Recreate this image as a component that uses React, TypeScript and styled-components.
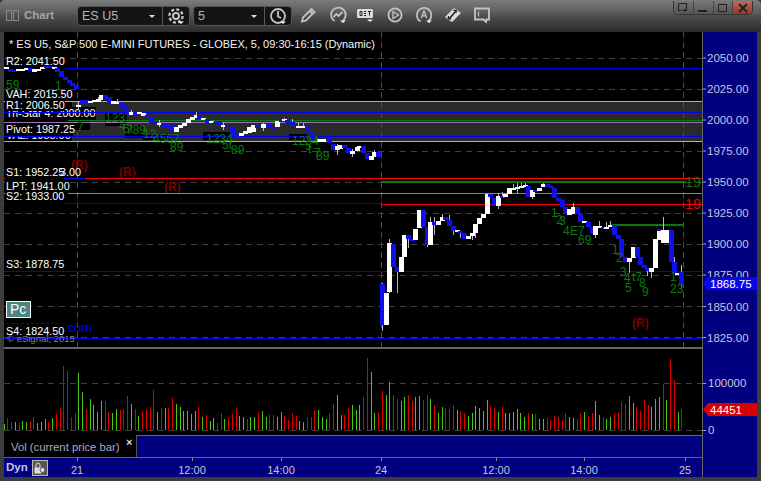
import React from "react";
import styled, { createGlobalStyle } from "styled-components";

const Global = createGlobalStyle`
  html, body { margin: 0; padding: 0; background: #3c3c3c; }
  #root { width: 761px; height: 481px; overflow: hidden; }
`;

const Win = styled.div`
  width: 761px; height: 481px; display: flex; flex-direction: column; box-sizing: border-box;
  background: #4a4a4a; font-family: "Liberation Sans", Arial, sans-serif; overflow: hidden;
  border-radius: 5px 5px 0 0;
`;
const TitleBar = styled.div`
  height: 32px; flex: none; display: flex; align-items: flex-start; position: relative; box-sizing: border-box;
  padding: 0 0 0 6px; background: linear-gradient(#7b7b7b 0, #5e5e5e 12px, #4e4e4e 16px, #2d2d2d 32px);
`;
const GripIcon = styled.svg`width: 14px; height: 14px; margin-top: 9px; flex: none;`;
const TitleText = styled.div`
  margin: 8px 0 0 4px; width: 53px; flex: none; font-size: 11.5px; font-weight: 700; line-height: 14px; color: #a4a4a4;
`;
const Group = styled.div<{ $w: number; $ml?: number }>`
  width: ${(p) => p.$w}px; margin: 6px 0 0 ${(p) => p.$ml ?? 0}px; height: 20px; flex: none; display: flex; box-sizing: border-box;
  border: 1px solid #555; border-radius: 4px; background: #141414; overflow: hidden;
`;
const SelectBox = styled.div`
  flex: 1; display: flex; align-items: center; justify-content: space-between; box-sizing: border-box; padding: 0 7px 0 4px;
  font-size: 12.5px; color: #b4b4b4; border-right: 1px solid #5a5a5a;
`;
const Caret = styled.span`
  width: 0; height: 0; border-left: 3px solid transparent; border-right: 3px solid transparent; border-top: 3px solid #ddd;
`;
const GroupBtn = styled.div`width: 26px; flex: none; display: flex; align-items: center; justify-content: center;`;
const Tool = styled.div<{ $ml: number }>`
  margin: 5px 0 0 ${(p) => p.$ml}px; width: 20px; height: 20px; flex: none; display: flex; align-items: center; justify-content: center;
`;
const WinControls = styled.div`
  position: absolute; top: 1px; left: 673px; width: 80px; height: 14px; display: flex; box-sizing: border-box;
  border: 1px solid #333; border-top: none; border-radius: 0 0 5px 5px; overflow: hidden; background: #666;
`;
const WinBtn = styled.div<{ $close?: boolean }>`
  flex: 1; display: flex; align-items: center; justify-content: center; border-left: 1px solid #444;
  background: ${(p) => (p.$close ? "linear-gradient(#c46a55,#8f3a28)" : "linear-gradient(#777,#555)")};
  &:first-child { border-left: none; }
`;
const Body = styled.div`
  flex: 1; display: flex; box-sizing: border-box; padding: 0 4px 4px 4px;
  background: #3c3c3c; border-left: 0;
`;
const Left = styled.div`width: 698px; flex: none; display: flex; flex-direction: column;`;
const Right = styled.div`flex: 1; display: flex; flex-direction: column; background: #000080; border-left: 1px solid #666;`;
const Svg = styled.svg`display: block; flex: none; background: #000;`;
const AxisSvg = styled.svg`display: block; flex: none; background: #000080;`;
const Sep = styled.div`height: 2px; flex: none; background: #666;`;
const LegendRow = styled.div`height: 22px; flex: none; display: flex;`;
const LegendTab = styled.div`
  width: 132px; flex: none; position: relative; background: #000; color: #a9a9c0; font-size: 11.3px; line-height: 24px; padding-left: 7px; box-sizing: border-box;
`;
const LegendClose = styled.span`
  position: absolute; left: 122px; top: -5px; color: #ddd; font-size: 11px; font-weight: 700;
`;
const LegendFill = styled.div`flex: 1; background: #000080; border-top: 1px solid #666; border-left: 1px solid #555;`;
const TimeBar = styled.div`
  height: 20px; flex: none; position: relative; display: flex; align-items: center; gap: 4px; box-sizing: border-box; padding-left: 2px;
  background: #000080; border-top: 1px solid #666;
`;
const DynLabel = styled.span`font-size: 11.5px; font-weight: 700; color: #c4c4dc; margin-top: -2px;`;
const LockBox = styled.div`
  width: 16px; height: 16px; box-sizing: border-box; border: 1px solid #bbb; background: #555; display: flex; align-items: center; justify-content: center;
`;
const TimeLabel = styled.span<{ $x: number }>`
  position: absolute; left: ${(p) => p.$x - 4 - 25}px; width: 50px; top: 5px; text-align: center; font-size: 11px; line-height: 14px; color: #c4c4dc;
`;
const TimeTick = styled.i<{ $x: number }>`
  position: absolute; left: ${(p) => p.$x - 4}px; top: 0; width: 1px; height: 3px; background: #888;
`;
const TimeEnd = styled.i`position: absolute; left: 698px; top: -1px; width: 1px; height: 1px; background: #666;`;
const AxisFoot = styled.div`flex: 1; background: #000080;`;
const HeaderText = styled.text`font: 11px "Liberation Sans", Arial, sans-serif; fill: #f4f4f4;`;
const LabelText = styled.text`
  font: 10.8px "Liberation Sans", Arial, sans-serif; fill: #fff;
`;
const TdText = styled.text`font: 12px "Liberation Sans", Arial, sans-serif; fill: #0c7a0c;`;
const RText = styled.text`font: bold 12px "Liberation Sans", Arial, sans-serif; fill: #7c0000;`;
const LinkText = styled.text`font: 13px "Liberation Sans", Arial, sans-serif; fill: #0000f0;`;
const CopyText = styled.text`font: 9.5px "Liberation Sans", Arial, sans-serif; fill: #808080;`;
const PcText = styled.text`font: 14px "Liberation Sans", Arial, sans-serif; fill: #fff;`;
const SeqText = styled.text<{ $c: string }>`font: 14.5px "Liberation Sans", Arial, sans-serif; fill: ${(p) => p.$c};`;
const AxisText = styled.text`font: 11.5px "Liberation Sans", Arial, sans-serif; fill: #c6c6dc;`;
const MarkerText = styled.text`font: 11.5px "Liberation Sans", Arial, sans-serif; fill: #fff;`;

type C = [number, number, number, "w" | "b", number?, number?];
const Z3: C[] = [[18,52,58,"w"],[30,56,65,"b"],[42,60,65,"b"],[55,58,62,"w"],[67,56,62,"w"],[79,55,58,"w"],[91,55,62,"b"],[103,58,65,"w"],[115,56,62,"w"],[127,50,58,"w"],[139,47,52,"b"],[151,48,55,"b"],[161,52,58,"w"],[170,55,65,"b"],[182,62,80,"b"],[194,80,90,"b"],[206,90,100,"b"],[217,98,108,"b"],[228,105,118,"b"],
[235,165,172,"w",155,180],[247,150,160,"b"],[259,150,162,"b"],[271,152,158,"w"],[283,150,156,"w"],[295,148,155,"w",140],[304,135,150,"w"],[316,135,150,"b"],[327,142,158,"b"],[339,152,162,"w"],[351,155,160,"w",148],[363,155,172,"b"],[373,165,180,"b"],[382,178,195,"b"],[394,185,195,"w",180],[406,185,195,"b"],[418,186,193,"w"],[430,190,198,"w"],[442,195,205,"b"],[454,205,218,"b"],[466,212,222,"b"],[478,218,224,"w",210,232],[490,218,232,"b"],[502,222,232,"b"],[517,228,245,"b"],[529,232,245,"w"],[541,225,235,"w"],[553,218,228,"w"],[565,208,218,"w"],[577,200,210,"w"],[589,195,205,"w",185],[598,195,208,"b"],[610,205,210,"w"],[622,208,222,"b"],[634,212,220,"w"],[646,215,222,"b"],[658,212,225,"b"],[670,225,232,"w",215,240],[682,225,235,"b"],[697,235,255,"b"],[712,250,260,"b"],[724,248,258,"w"],[736,242,252,"w"],[748,232,248,"w"],[760,226,245,"w"],[772,226,235,"b"]];
const Z9: C[] = [[188,102,115,"w",98,122],[205,100,110,"b"],[218,110,118,"b"],[232,92,110,"w"],[243,90,95,"b"],[253,88,92,"w",84],[262,90,98,"b"],[277,95,105,"b",88],[295,108,113,"w",100],[308,108,113,"w",100],[322,108,125,"b"],[333,125,135,"b"],[343,135,150,"b"],[356,148,155,"w",158],[368,148,155,"w"],[387,143,160,"b"],[400,162,180,"b"],[412,168,180,"w",162,195],[420,165,178,"w"],[433,165,175,"b"],[445,175,190,"b"],[457,182,192,"w",176,200],[470,170,182,"w"],[478,168,172,"w"],[490,168,190,"b"],[502,190,208,"b"],[514,198,210,"w"],[522,185,200,"w",180],[535,185,202,"b"]];
const Z5: C[] = [[37,342,465,"b",340,483],[49,370,465,"w"],[58,220,365,"w",208,370],[70,222,290,"b"],[82,292,305,"b",290,370],[94,261,305,"w"],[103,195,260,"w"],[115,195,208,"b",195,233],[127,208,212,"b"],[136,178,210,"w"],[147,120,175,"w"],[160,120,170,"b"],[171,170,225,"b",170,230],[181,156,225,"w",140],[191,156,165,"b",140,195],[205,153,165,"w"],[216,142,152,"w",132],[226,142,150,"b"],[238,150,168,"b",135],[250,168,183,"b",168,195],[262,180,186,"w"],[270,184,190,"b",184,205],[282,190,207,"b"],[295,198,207,"w"],[306,188,198,"w",188,210],[316,162,188,"w",162,205],[328,145,162,"w"],[340,132,145,"w"],[352,72,132,"w"],[361,72,80,"b"],[372,84,107,"b"],[385,78,107,"w",68,118],[396,78,82,"b",65],[406,72,80,"w"],[418,55,72,"w"],[430,55,60,"w",42],[442,50,55,"w",40,70],[452,47,52,"w",40],[464,45,50,"w",38],[473,48,80,"b"],[487,60,80,"w",60,88],[496,60,65,"b"],[508,55,62,"w"],[519,42,52,"w",38],[532,42,50,"b"],[543,48,55,"b"],[552,55,83,"b"],[564,83,93,"b"],[576,90,110,"b"]];
const Z6: C[] = [[16,110,133,"b"],[28,118,135,"w"],[40,112,133,"w",100],[52,112,133,"b"],[61,133,155,"b"],[73,152,155,"w"],[85,155,172,"b"],[97,172,193,"b"],[106,167,195,"w",167,205],[118,167,172,"w",153],[130,172,178,"b"],[139,172,178,"w",155],[151,165,172,"w",153],[163,165,195,"b"],[175,195,208,"b"],[184,208,260,"b"],[196,260,275,"b"],[208,265,275,"w",265,308],[220,232,265,"w"],[232,232,262,"b"],[241,262,285,"b"],[253,285,293,"b"],[262,293,303,"b",293,318],[274,293,305,"w",293,325],[286,208,295,"w"],[298,177,210,"w"],[298,177,183,"b"],[310,180,220,"w",140],[325,180,220,"w"],[332,180,275,"b"],[343,275,310,"b",262],[352,308,312,"w"],[364,305,345,"b",285,350]];

const toPage = (list: C[], ox: number, oy: number) =>
  list.map(([z, t, b, c, wt, wb]) => ({
    x: Math.round(ox + z / 3),
    t: Math.round(oy + t / 3),
    b: Math.round(oy + b / 3),
    c,
    wt: Math.round(oy + (wt ?? t) / 3),
    wb: Math.round(oy + (wb ?? b) / 3),
  }));
const candles = [...toPage(Z3, 0, 50), ...toPage(Z9, 200, 90), ...toPage(Z5, 370, 170), ...toPage(Z6, 560, 170)];

type V = [number, number, "r" | "g"];
const VZ7: V[] = [[12,252,"g"],[22,235,"r"],[34,246,"r"],[46,246,"g"],[57,250,"r"],[67,243,"g"],[79,246,"g"],[90,246,"r"],[100,232,"r"],[112,250,"g"],[124,247,"g"],[135,238,"g"],[145,246,"r"],[157,234,"g"],[169,222,"r"],[181,204,"r"],[190,78,"r"],[202,93,"r"],[214,231,"r"],[226,219,"r"],[235,99,"g"],[247,156,"g"],[259,208,"r"],[271,177,"g"],[281,195,"g"],[292,216,"g"],[304,183,"g"],[316,183,"r"],[326,216,"r"],[338,219,"g"],[349,207,"g"],[361,210,"r"],[370,207,"r"],[382,168,"r"],[394,192,"g"],[406,207,"r"],[415,228,"g"],[427,213,"r"],[439,210,"r"],[451,201,"r"],[460,150,"r"],[472,216,"g"],[484,204,"r"],[496,204,"g"],[505,204,"r"],[517,174,"r"],[529,192,"g"],[541,201,"g"],[550,213,"g"],[562,213,"g"],[574,222,"g"],[586,213,"g"],[595,201,"r"],[607,231,"g"],[619,225,"r"],[631,243,"g"],[640,234,"g"],[652,249,"r"],[664,219,"r"],[673,237,"g"],[685,234,"r"],[697,222,"r"],[709,204,"r"],[718,228,"g"],[730,231,"g"],[742,237,"r"],[751,231,"g"],[763,231,"g"]];
const VZ11: V[] = [[10,186,"r"],[22,183,"g"],[34,201,"g"],[43,195,"r"],[55,195,"r"],[67,201,"g"],[79,186,"g"],[88,198,"r"],[100,210,"r"],[112,189,"r"],[124,198,"r"],[133,213,"g"],[145,216,"g"],[157,201,"r"],[169,201,"r"],[178,180,"r"],[190,180,"g"],[202,201,"g"],[214,207,"g"],[223,189,"r"],[235,162,"r"],[247,135,"g"],[259,195,"g"],[268,195,"r"],[280,174,"r"],[292,165,"g"],[304,180,"g"],[313,165,"g"],[325,141,"r"],[337,24,"r"],[349,66,"g"],[358,189,"g"],[370,186,"r"]];
const VZ10: V[] = [[7,153,"r"],[19,165,"g"],[28,126,"g"],[40,165,"r"],[52,177,"r"],[64,183,"g"],[73,171,"g"],[85,165,"r"],[97,183,"r"],[106,171,"g"],[118,168,"g"],[130,180,"r"],[142,165,"r"],[151,177,"g"],[163,195,"r"],[175,219,"g"],[187,201,"g"],[196,204,"r"],[208,207,"r"],[220,195,"r"],[232,210,"g"],[241,216,"r"],[253,219,"r"],[265,228,"g"],[277,219,"g"],[286,198,"g"],[298,204,"g"],[310,213,"g"],[322,180,"g"],[331,198,"r"],[343,204,"r"],[355,216,"g"],[367,201,"r"]];
const VZ8: V[] = [[16,219,"g"],[28,219,"g"],[40,216,"g"],[52,207,"g"],[61,219,"g"],[73,231,"g"],[85,219,"r"],[97,222,"g"],[106,222,"r"],[118,237,"g"],[130,237,"g"],[142,234,"r"],[151,240,"r"],[163,228,"r"],[175,231,"r"],[187,240,"r"],[196,219,"r"],[208,231,"g"],[220,234,"g"],[232,237,"r"],[241,219,"r"],[253,216,"g"],[265,228,"r"],[277,219,"r"],[286,183,"g"],[298,225,"g"],[310,231,"r"],[319,237,"g"],[331,231,"g"],[343,222,"r"],[355,216,"r"],[364,186,"r"],[376,192,"r"],[388,168,"g"],[400,189,"g"],[409,201,"r"],[421,213,"r"],[433,180,"r"],[445,195,"r"],[454,201,"g"],[466,177,"g"],[478,171,"g"],[490,132,"r"],[499,180,"g"],[511,57,"r"],[523,120,"r"],[535,216,"g"],[544,207,"r"]];
const volSet = (l: V[], ox: number, base: number) =>
  l.map(([z, t, c]) => ({ x: Math.floor(ox + z / 3), h: Math.round((base - t) / 3), c }));
const bars = [...volSet(VZ7, 0, 270), ...volSet(VZ11, 255, 240), ...volSet(VZ10, 380, 270), ...volSet(VZ8, 500, 270)];

const gridYs = [58, 89, 120, 151, 182, 213, 244, 275, 306, 337];
const BLUE = "#0000f8";
const hLines: [number, number, number, string, number][] = [
  [65, 702, 68, BLUE, 1],
  [4, 702, 101, "#40e0d8", 1],
  [4, 702, 112, BLUE, 1],
  [68, 702, 120, "#0a7a0a", 1],
  [4, 702, 122, "#a070b8", 1],
  [4, 702, 136, BLUE, 1],
  [4, 702, 141, "#40e0d8", 1],
  [4, 6, 178, "#ff0000", 1],
  [64, 85, 178, BLUE, 1],
  [85, 702, 178, "#ff0000", 1],
  [381, 686, 181, "#0a7a0a", 2],
  [4, 6, 193, "#a070b8", 1],
  [68, 702, 193, "#a070b8", 1],
  [4, 6, 203, BLUE, 1],
  [64, 381, 203, BLUE, 1],
  [381, 702, 204, "#ff0000", 1],
  [612, 683, 224, "#0a7a0a", 2],
  [4, 702, 271, BLUE, 1],
  [4, 702, 338, BLUE, 1],
];
const patches: [number, number, number, number][] = [
  [4, 100, 68, 41],[68, 107, 28, 13],[68, 120, 22, 10],[105, 112, 22, 14],[125, 125, 18, 13],[143, 135, 29, 5],
  [203, 132, 27, 8],[203, 134, 14, 6],[289, 134, 18, 6],
];
const tdDigits: [number, number, string][] = [
  [6, 89, "59"],[55, 90, "1"],[77, 131, "7"],[105, 122, "123"],[119, 130, "4"],[123, 133, "5t"],[126, 134, "789"],[143, 138, "12"],[153, 143, "4567"],[170, 151, "89"],
  [206, 143, "1234"],[222, 149, "5t"],[231, 154, "89"],[292, 145, "1234"],[305, 150, "5"],[308, 153, "t"],[314, 157, "7"],[316, 160, "89"],
  [551, 217, "1"],[556, 224, "2"],[559, 225, "3"],[563, 235, "4"],[570, 235, "E7"],[578, 244, "69"],
  [612, 254, "1"],[616, 262, "2"],[620, 276, "3"],[624, 282, "4"],[625, 292, "5"],[632, 281, "t7"],[639, 287, "8"],[642, 296, "9"],[670, 281, "1"],[670, 293, "23"],
];
const rMarks: [number, number][] = [[71, 169], [119, 176], [164, 191], [632, 327]];
type L = [number, number, string];
const labelsA: L[] = [[6, 65, "R2: 2041.50"],[6, 98, "VAH: 2015.50"],[6, 117, "Tri-Star 4: 2000.00"],[6, 139, "VAL: 1985.00"]];
const labelsB: L[] = [
  [6, 109, "R1: 2006.50"],[6, 133, "Pivot: 1987.25"],[60, 176, "3.00"],[6, 176, "S1: 1952.25"],[6, 190, "LPT: 1941.00"],[6, 200, "S2: 1933.00"],[6, 268, "S3: 1878.75"],[6, 335, "S4: 1824.50"],
];
const labelBacks: [number, number, number, number][] = [[5, 100, 60, 11], [5, 124, 68, 12], [5, 168, 58, 11], [5, 182, 64, 9], [5, 191, 59, 10]];
const axisTop: [string, number][] = [["2050.00",58],["2025.00",89],["2000.00",120],["1975.00",151],["1950.00",182],["1925.00",213],["1900.00",244],["1875.00",275],["1850.00",306.5],["1825.00",337.5]];

const icon = { fill: "none", stroke: "#c4c4c4", strokeWidth: 1.8 } as const;
const Ico: React.FC<{ children: React.ReactNode; w?: number }> = ({ children, w = 20 }) => (
  <svg width={w} height={20} viewBox="0 0 20 20" {...icon}>{children}</svg>
);
const Drop = () => <path d="M12 15.5h6l-3 2.5z" fill="#eee" stroke="none" />;

const MainPlot = () => (
  <Svg width={698} height={315} viewBox="4 32 698 315">
    <rect x={4} y={102} width={698} height={39} fill="#2a2a2a" />
    {gridYs.map((y) => (
      <line key={y} x1={4} x2={702} y1={y + 0.5} y2={y + 0.5} stroke="#404040" strokeDasharray="6 5" />
    ))}
    {[77.5, 381.5, 683.5].map((x) => (
      <line key={x} x1={x} x2={x} y1={32} y2={347} stroke="#4a4a4a" strokeDasharray="6 4" />
    ))}
    {patches.map(([x, y, w, h], i) => <rect key={i} x={x} y={y} width={w} height={h} fill="#000" />)}
    {rMarks.map(([x, y], i) => <RText key={i} x={x} y={y}>(R)</RText>)}
    {labelsA.map(([x, y, t], i) => <LabelText key={i} x={x} y={y}>{t}</LabelText>)}
    {hLines.map(([a, b, y, c, sw], i) => (
      <rect key={i} x={a} y={y} width={b - a} height={sw} fill={c} shapeRendering="crispEdges" />
    ))}
    <g shapeRendering="crispEdges">
      {candles.map((k, i) => (
        <g key={i}>
          {(k.wt < k.t || k.wb > k.b) && <line x1={k.x + 0.5} x2={k.x + 0.5} y1={k.wt} y2={k.wb} stroke="#b8b8b8" />}
          <rect x={k.x - 2} y={k.t} width={5} height={Math.max(k.b - k.t, 2)} fill={k.c === "w" ? "#fff" : "#1010e8"} />
        </g>
      ))}
    </g>
    {tdDigits.map(([x, y, t], i) => <TdText key={i} x={x} y={y}>{t}</TdText>)}
    <SeqText $c="#0c7a0c" x={685} y={187}>19</SeqText>
    <SeqText $c="#f00000" x={685} y={209}>19</SeqText>
    <HeaderText x={9} y={48}>* ES U5, S&amp;P 500 E-MINI FUTURES - GLOBEX, 5, 09:30-16:15 (Dynamic)</HeaderText>
    <LinkText x={64} y={332}>.com</LinkText>
    <line x1={6} x2={62} y1={323.5} y2={323.5} stroke="#0000f0" strokeDasharray="3 2" />
    <CopyText x={7} y={342}>© eSignal, 2015</CopyText>
    {labelBacks.map(([x, y, w, h], i) => <rect key={i} x={x} y={y} width={w} height={h} fill="#000" />)}
    {labelsB.map(([x, y, t], i) => <LabelText key={i} x={x} y={y}>{t}</LabelText>)}
    <rect x={6.5} y={301.5} width={24} height={16} fill="#4d8585" stroke="#fff" />
    <PcText x={10} y={314}>Pc</PcText>
  </Svg>
);

const VolPlot = () => (
  <Svg width={698} height={86} viewBox="4 349 698 86">
    <line x1={4} x2={702} y1={383.5} y2={383.5} stroke="#404040" strokeDasharray="6 5" />
    <line x1={4} x2={702} y1={430.5} y2={430.5} stroke="#404040" strokeDasharray="6 5" />
    {bars.map((b, i) => (
      <rect key={i} x={b.x} y={430 - b.h} width={1} height={b.h} fill={b.c === "r" ? "#e00000" : "#44cc11"} shapeRendering="crispEdges" />
    ))}
  </Svg>
);

const times: [number, string][] = [[77, "21"], [192, "12:00"], [281, "14:00"], [381, "24"], [496, "12:00"], [584, "14:00"], [685, "25"]];

export default function App() {
  return (
    <Win>
      <Global />
      <TitleBar>
        <GripIcon viewBox="0 0 14 14"><g fill="none" stroke="#8a8a8a"><rect x="0.5" y="1.5" width="5" height="10" /><rect x="7.5" y="1.5" width="5" height="10" /></g></GripIcon>
        <TitleText>Chart</TitleText>
        <Group $w={113}>
          <SelectBox>ES U5<Caret /></SelectBox>
          <GroupBtn>
            <Ico><circle cx="10" cy="10" r="3" strokeWidth={2} /><circle cx="10" cy="10" r="6.6" strokeWidth={2.4} strokeDasharray="3 2.2" /><Drop /></Ico>
          </GroupBtn>
        </Group>
        <Group $w={99} $ml={3}>
          <SelectBox>5<Caret /></SelectBox>
          <GroupBtn>
            <Ico><circle cx="10" cy="10" r="7" strokeWidth={1.8} /><path d="M10 5v5.5l3 1.5" /><Drop /></Ico>
          </GroupBtn>
        </Group>
        <Tool $ml={6}><Ico><path d="M4 16.5l1-4L13.5 4l3 3L8 15.5z" /><path d="M12 6l2.5 2.5" /></Ico></Tool>
        <Tool $ml={10}><Ico><path d="M6.5 16A7.3 7.3 0 1 1 15 15.5" /><path d="M5.5 12l3-3 2 2 4-4" /><Drop /></Ico></Tool>
        <Tool $ml={8}>
          <svg width="20" height="20" viewBox="0 0 20 20"><rect x="1" y="4" width="16" height="9" rx="1.5" fill="#ddd" /><path d="M4 6.5h2v4H4zM8 6.5h2M8 8.5h2M8 10.5h2M12 6.5h3M13.5 6.5v4" stroke="#222" fill="none" /><path d="M11 14.5h6l-3 2.5z" fill="#eee" /></svg>
        </Tool>
        <Tool $ml={9}><Ico><circle cx="10" cy="10" r="6.6" strokeWidth={1.8} /><path d="M8 6.5l5.5 3.5-5.5 3.5z" strokeWidth={1.3} /></Ico></Tool>
        <Tool $ml={9}><Ico><path d="M6.5 16.5A7.3 7.3 0 1 1 14.5 16" strokeWidth={1.8} /><path d="M7.3 13l2.7-7 2.7 7M8.3 10.8h3.4" strokeWidth={1.3} /><Drop /></Ico></Tool>
        <Tool $ml={9}>
          <svg width="20" height="20" viewBox="0 0 20 20"><path d="M2 12L11 3l7 5-9 9z" fill="#ddd" stroke="#999" /><path d="M7 13l5-6M10.5 5.5h2.5v2.5M5.5 11v2.8h2.7" stroke="#222" strokeWidth="1.5" fill="none" /></svg>
        </Tool>
        <Tool $ml={9}><Ico><path d="M3 3.5h14v11h-2.5l-.5 2.5-2.5-2.5H3z" strokeWidth={1.8} /><path d="M6.5 6.5v5" strokeWidth={1.2} /></Ico></Tool>
        <WinControls>
          <WinBtn><svg width="14" height="12" viewBox="0 0 14 12" fill="none" stroke="#222"><path d="M2.5 1.5h8v7h-2" strokeWidth="1.2" /><path d="M2.5 1.5v7h3" strokeWidth="1.2" /><path d="M6 7.5h5l-2.5 2.5z" fill="#222" stroke="none" /></svg></WinBtn>
          <WinBtn><svg width="12" height="10" viewBox="0 0 12 10"><rect x="1" y="7" width="9" height="2" fill="#222" /></svg></WinBtn>
          <WinBtn><svg width="12" height="10" viewBox="0 0 12 10" fill="none" stroke="#222"><rect x="1.5" y="1.5" width="8" height="7" /></svg></WinBtn>
          <WinBtn $close><svg width="12" height="10" viewBox="0 0 12 10" stroke="#222" strokeWidth="2"><path d="M2 1l8 8M10 1L2 9" /></svg></WinBtn>
        </WinControls>
      </TitleBar>
      <Body>
        <Left>
          <MainPlot />
          <Sep />
          <VolPlot />
          <LegendRow>
            <LegendTab>Vol (current price bar)<LegendClose>×</LegendClose></LegendTab>
            <LegendFill />
          </LegendRow>
          <TimeBar>
            <DynLabel>Dyn</DynLabel>
            <LockBox>
              <svg width="12" height="12" viewBox="0 0 12 12" fill="none" stroke="#ddd"><path d="M2 6V3a2 2 0 0 1 4 0v3" /><rect x="1" y="6" width="6" height="5" fill="#ddd" /><circle cx="8.5" cy="8" r="2.5" fill="#ddd" stroke="#555" /></svg>
            </LockBox>
            {times.map(([x, t]) => <React.Fragment key={x}><TimeTick $x={x} /><TimeLabel $x={x}>{t}</TimeLabel></React.Fragment>)}
            <TimeEnd />
          </TimeBar>
        </Left>
        <Right>
          <AxisSvg width={54} height={317} viewBox="703 32 54 317">
            {axisTop.map(([t, y]) => (
              <g key={t}>
                <line x1={703} x2={706} y1={y} y2={y} stroke="#aaa" />
                <AxisText x={707} y={y + 4}>{t}</AxisText>
              </g>
            ))}
            <polygon points="703,283.5 707,277 757,277 757,290 707,290" fill="#0808e8" />
            <MarkerText x={710} y={288}>1868.75</MarkerText>
          </AxisSvg>
          <AxisSvg width={54} height={86} viewBox="703 349 54 86">
            <line x1={703} x2={706} y1={383.5} y2={383.5} stroke="#aaa" />
            <AxisText x={708} y={387}>100000</AxisText>
            <polygon points="703,409.5 708,403 757,403 757,416 708,416" fill="#d80000" />
            <MarkerText x={710} y={414}>44451</MarkerText>
            <line x1={703} x2={706} y1={430.5} y2={430.5} stroke="#aaa" />
            <AxisText x={708} y={434}>0</AxisText>
          </AxisSvg>
          <AxisFoot />
        </Right>
      </Body>
    </Win>
  );
}
